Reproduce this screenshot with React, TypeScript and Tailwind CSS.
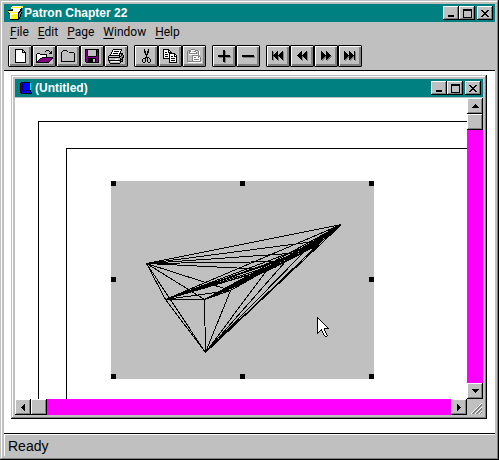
import type { ReactNode } from "react";

const COLORS: Record<string, string> = {
  k: "#000000",
  w: "#ffffff",
  g: "#808080",
  s: "#c0c0c0",
  p: "#800080",
  y: "#ffff00",
  b: "#0000ff",
  n: "#000080",
  c: "#00ffff",
};

function Pixels({ rows }: { rows: string[] }) {
  const width = Math.max(...rows.map((r) => r.length));
  return (
    <svg width={width} height={rows.length} viewBox={`0 0 ${width} ${rows.length}`} shapeRendering="crispEdges" aria-hidden="true" className="shrink-0">
      {rows.flatMap((row, y) =>
        [...row].map((ch, x) => (COLORS[ch] ? <rect key={`${x}-${y}`} x={x} y={y} width={1} height={1} fill={COLORS[ch]} /> : null)),
      )}
    </svg>
  );
}

const ICONS = {
  fresh: [
    "kkkkkkkk...",
    "kwwwwwwkk..",
    "kwwwwwwkwk.",
    "kwwwwwwkkkk",
    "kwwwwwwwwwk",
    "kwwwwwwwwwk",
    "kwwwwwwwwwk",
    "kwwwwwwwwwk",
    "kwwwwwwwwwk",
    "kwwwwwwwwwk",
    "kwwwwwwwwwk",
    "kwwwwwwwwwk",
    "kwwwwwwwwwk",
    "kkkkkkkkkkk",
  ],
  open: [
    "..........kkk....",
    ".........k...k.k.",
    "..............kk.",
    ".kkk.........kkk.",
    "kwwwkkkkkkk......",
    "kwwwwwwwwwk......",
    "kwwwwwwwwwk......",
    "kwwwwwkkkkkkkkkkk",
    "kwwwkkppppppppppk",
    "kwwkpppppppppppk.",
    "kwkpppppppppppk..",
    "kkpppppppppppk...",
    "kkkkkkkkkkkkk....",
  ],
  folder: [
    "..kkkk........",
    ".kssssk.......",
    "kssssssskkkkk.",
    "kssssssssssssk",
    "kssssssssssssk",
    "kssssssssssssk",
    "kssssssssssssk",
    "kssssssssssssk",
    "kssssssssssssk",
    "kssssssssssssk",
    "kssssssssssssk",
    "kkkkkkkkkkkkkk",
  ],
  save: [
    "kkkkkkkkkkkkkk",
    "kpksssssssskpk",
    "kpksssssssskkk",
    "kpksssssssskpk",
    "kpksssssssskpk",
    "kpksssssssskpk",
    "kpksssssssskpk",
    "kppkkkkkkkkppk",
    "kppppppppppppk",
    "kppkkkkkkkkppk",
    "kppkkkkksskppk",
    "kppkkkkksskppk",
    "kppkkkkksskppk",
    ".kkkkkkkkkkkkk",
  ],
  print: [
    ".....kkkkkkkkk..",
    "....kwwwwwwwwk..",
    "....kwkkkkkwk...",
    "...kwwwwwwwwk...",
    "...kwkkkkkwkkkk.",
    "..kwwwwwwwwkskk.",
    ".kkkkkkkkkkkskgk",
    "ksssssssssskkggk",
    "kkkkkkkkkkkksgkk",
    "kssssssssssskgk.",
    "ksssssswwwsskkk.",
    "kkkkkkkkkkkkkgk.",
    ".kswwwwwwwwskkk.",
    ".kssssssssssk...",
    "..kkkkkkkkkk....",
  ],
  cut: [
    "..k...k..",
    "..k...k..",
    "..kk.kk..",
    "..kk.kk..",
    "...k.k...",
    "...kkk...",
    "....k....",
    "....k....",
    "...kkkk..",
    ".kkk.k.k.",
    "k..k.k..k",
    "k..k.k..k",
    "k..k.k..k",
    ".kk...kk.",
  ],
  copy: [
    "kkkkkk........",
    "kwwwwkk.......",
    "kwwwwkwk......",
    "kwkkwkkkk.....",
    "kwwwwwkkkkkk..",
    "kwkkkwkwwwwkk.",
    "kwwwwwkwwwwkwk",
    "kwkkkwkwkkwkkk",
    "kwwwwwkwwwwwwk",
    "kkkkkkkwkkkkwk",
    "......kwwwwwwk",
    "......kwkkkkwk",
    "......kwwwwwwk",
    "......kkkkkkkk",
  ],
  paste: [
    ".....gggg......",
    "..gggwwwwggg...",
    ".gsggwssggwsgw.",
    ".gsgwwwwwwgsgw.",
    ".gsggggggggsgw.",
    ".gswwwwwwwwwgw.",
    ".gssssggggggg..",
    ".gssssgwwwwwgg.",
    ".gssssgwggwwgwg",
    ".gssssgwwwwwwwg",
    ".gssssgwgggggwg",
    ".gssssgwwwwwwwg",
    ".ggggggggggggggw",
    "..wwwwwwwwwwwwww",
  ],
  plus: [
    ".....kk......",
    ".....kkg.....",
    ".....kkg.....",
    ".....kkg.....",
    ".....kkg.....",
    "kkkkkkkkkkkk.",
    "kkkkkkkkkkkkg",
    ".ggggkkgggggg",
    ".....kkg.....",
    ".....kkg.....",
    ".....kkg.....",
    ".....kkg.....",
    "......gg.....",
  ],
  minus: ["kkkkkkkkkkkk.", "kkkkkkkkkkkkg", ".gggggggggggg"],
  first: [
    "k....k....k.",
    "kg..kk...kkg",
    "kg.kkk..kkkg",
    "kgkkkk.kkkkg",
    "kkkkkkkkkkkg",
    "kgkkkkgkkkkg",
    "kg.kkkg.kkkg",
    "kg..kkg..kkg",
    "kg...kg...kg",
    ".g....g....g",
  ],
  back: [
    "....k....k.",
    "...kk...kkg",
    "..kkk..kkkg",
    ".kkkk.kkkkg",
    "kkkkkkkkkkg",
    ".kkkkgkkkkg",
    "..kkkg.kkkg",
    "...kkg..kkg",
    "....kg...kg",
    ".....g....g",
  ],
  forward: [
    "k....k.....",
    "kk...kk....",
    "kkk..kkk...",
    "kkkk.kkkk..",
    "kkkkkkkkkk.",
    "kkkkgkkkkgg",
    "kkkggkkkgg.",
    "kkgg.kkgg..",
    "kgg..kgg...",
    ".g....g....",
  ],
  last: [
    "k....k....k.",
    "kk...kk...kg",
    "kkk..kkk..kg",
    "kkkk.kkkk.kg",
    "kkkkkkkkkkkg",
    "kkkkgkkkkgkg",
    "kkkggkkkggkg",
    "kkgg.kkgg.kg",
    "kgg..kgg..kg",
    ".g....g....g",
  ],
  app: [
    "....wwwwwwwwwyy",
    "...yyyyyyyyyyyw",
    "...wwwwwwwwwwk.",
    "....kwwwwwwwkk.",
    "kkkkkwwwwwwwkk.",
    "ywwwwwwwwwwkkg.",
    "kyyyyyyyyykkgk.",
    ".kwwwwwwwwkggk.",
    "..wwyyyyyykgk..",
    "..wyyyyyyykgk..",
    "..wyyyyyyykgk..",
    "..wyyyyyyykk...",
    "..wyyyyyyykk...",
    "..kkkkkkkkk....",
  ],
  doc: [
    ".kkkkkkkkk..",
    "kbnbbbbbbkc.",
    "kbnbbbbbbkc.",
    "kbnbbbbbbkc.",
    "kbnbbbbbbkc.",
    "kbnbbbbbbkc.",
    "kbnbbbbbbkc.",
    "kbnbbbbbbkc.",
    "kbnnnnnnnkk.",
    "knbbbbbbbbk.",
    "kkbbbbbbbbbk",
    ".kkkkkkkkkkk",
  ],
  min: [".......", ".......", ".......", ".......", ".......", ".......", "kkkkkk.", "kkkkkk."],
  max: ["kkkkkkkkk", "kkkkkkkkk", "k.......k", "k.......k", "k.......k", "k.......k", "k.......k", "k.......k", "kkkkkkkkk"],
  close: ["kk....kk", ".kk..kk.", "..kkkk..", "...kk...", "..kkkk..", ".kk..kk.", "kk....kk"],
  up: ["...k...", "..kkk..", ".kkkkk.", "kkkkkkk"],
  down: ["kkkkkkk", ".kkkkk.", "..kkk..", "...k..."],
  left: ["...k", "..kk", ".kkk", "kkkk", ".kkk", "..kk", "...k"],
  right: ["k...", "kk..", "kkk.", "kkkk", "kkk.", "kk..", "k..."],
  cursor: [
    "k...........",
    "kk..........",
    "kwk.........",
    "kwwk........",
    "kwwwk.......",
    "kwwwwk......",
    "kwwwwwk.....",
    "kwwwwwwk....",
    "kwwwwwwwk...",
    "kwwwwwwwwk..",
    "kwwwwwwwwwk.",
    "kwwwwwwkkkkk",
    "kwwwkwwk....",
    "kwwkkwwk....",
    "kwk..kwwk...",
    "kk...kwwk...",
    "k.....kwwk..",
    "......kwwk..",
    ".......kwwk.",
    "........kk..",
  ],
};

type IconName = keyof typeof ICONS;

const RAISED = "shadow-[inset_-1px_-1px_#000,inset_1px_1px_#fff,inset_-2px_-2px_#808080]";

function Face({ icon, label, size }: { icon?: IconName; label: string; size: string }) {
  return (
    <button type="button" aria-label={label} className={`flex shrink-0 items-center justify-center bg-[#c0c0c0] ${RAISED} ${size}`}>
      {icon && <Pixels rows={ICONS[icon]} />}
    </button>
  );
}

function TitleBar({ icon, title }: { icon: IconName; title: string }) {
  return (
    <header className="flex h-[18px] shrink-0 items-center bg-[#008080] px-[2px]">
      <span className="flex w-[18px] justify-center">
        <Pixels rows={ICONS[icon]} />
      </span>
      <h1 className="flex-1 text-[12px] leading-[18px] font-bold text-white">{title}</h1>
      <Face icon="min" label="Minimize" size="h-[14px] w-4" />
      <Face icon="max" label="Maximize" size="mr-[2px] h-[14px] w-4" />
      <Face icon="close" label="Close" size="h-[14px] w-4" />
    </header>
  );
}

const TOOL_GROUPS: { icon: IconName; label: string }[][] = [
  [
    { icon: "fresh", label: "New" },
    { icon: "open", label: "Open" },
    { icon: "folder", label: "Close" },
    { icon: "save", label: "Save" },
    { icon: "print", label: "Print" },
  ],
  [
    { icon: "cut", label: "Cut" },
    { icon: "copy", label: "Copy" },
    { icon: "paste", label: "Paste" },
  ],
  [
    { icon: "plus", label: "New page" },
    { icon: "minus", label: "Delete page" },
  ],
  [
    { icon: "first", label: "First page" },
    { icon: "back", label: "Previous page" },
    { icon: "forward", label: "Next page" },
    { icon: "last", label: "Last page" },
  ],
];

function ToolButton({ icon, label }: { icon: IconName; label: string }) {
  return (
    <button
      type="button"
      aria-label={label}
      className="flex h-[22px] w-6 items-center justify-center rounded-[1px] border border-black bg-[#c0c0c0] shadow-[inset_1px_1px_#fff,inset_-2px_-2px_#808080]"
    >
      <Pixels rows={ICONS[icon]} />
    </button>
  );
}

type Point = [number, number];

const TIP: Point = [230, 43];
const EDGE: Point[] = [TIP, [211, 59], [192, 71], [174, 80], [156, 88], [119, 109], [93, 118]];
const SPINE: Point[] = [[220, 52], [202, 66], [183, 76], [165, 85], [146, 94], [133, 101]];
const NOSE: Point = [35, 82];
const WING: Point = [54, 118];
const FOLD: Point = [93, 118];
const KEEL: Point = [94, 171];

const fan = (from: Point, to: Point[]) => to.map((p) => `M${from.join(" ")}L${p.join(" ")}`).join("");

function Wireframe() {
  return (
    <svg width="263" height="198" viewBox="0 0 263 198" shapeRendering="crispEdges" fill="none" stroke="#000" role="img" aria-label="Wireframe model">
      <g transform="translate(0.5 0.5)">
        <path d={fan(NOSE, EDGE)} />
        <path d={fan(KEEL, EDGE)} />
        <path d={fan(WING, EDGE)} />
        <path d={fan(FOLD, [...EDGE, ...SPINE])} />
        <path d={fan(TIP, [...EDGE, ...SPINE])} />
        <path d={fan(WING, [SPINE[1], SPINE[3]])} />
        <path d={`M${NOSE}L${WING}L${KEEL}L${NOSE}`} />
        <path d={`M${EDGE.join("L")}`} />
      </g>
    </svg>
  );
}

const HANDLES = [
  "left-0 top-0",
  "left-[129px] top-0",
  "right-0 top-0",
  "left-0 top-24",
  "right-0 top-24",
  "left-0 bottom-0",
  "left-[129px] bottom-0",
  "right-0 bottom-0",
];

function Page(): ReactNode {
  return (
    <main className="min-w-0 flex-1 overflow-hidden bg-white pt-[23px] pl-[23px]">
      <div className="h-full border-t border-l border-black pt-[26px] pl-[27px]">
        <div className="h-full border-t border-l border-black pt-8 pl-11">
          <div className="relative h-[198px] w-[263px] bg-[#c0c0c0]">
            <Wireframe />
            {HANDLES.map((place) => (
              <span key={place} className={`absolute size-[5px] bg-black ${place}`} />
            ))}
            <span className="absolute top-[136px] left-[206px]">
              <Pixels rows={ICONS.cursor} />
            </span>
          </div>
        </div>
      </div>
    </main>
  );
}

const WINDOW_EDGE =
  "shadow-[inset_-1px_-1px_#000,inset_1px_1px_#c0c0c0,inset_-2px_-2px_#808080,inset_2px_2px_#fff]";

export default function App() {
  return (
    <div className={`flex h-screen min-h-80 w-full flex-col bg-[#c0c0c0] p-1 font-["Liberation_Sans",Arial,sans-serif] text-black ${WINDOW_EDGE}`}>
      <TitleBar icon="app" title="Patron Chapter 22" />
      <nav className={`flex h-[19px] shrink-0 items-center gap-[9px] pl-[6px] font-["Roboto",sans-serif] text-[12px] leading-[18px]`}>
        {["File", "Edit", "Page", "Window", "Help"].map((item) => (
          <button key={item} type="button">
            <span className="underline underline-offset-2">{item[0]}</span>
            {item.slice(1)}
          </button>
        ))}
      </nav>
      <div className="flex h-[30px] shrink-0 gap-[6px] border-b border-black pt-1 pl-1">
        {TOOL_GROUPS.map((group, i) => (
          <div key={i} className="flex">
            {group.map((tool) => (
              <ToolButton key={tool.icon} {...tool} />
            ))}
          </div>
        ))}
      </div>

      <div className="flex min-h-0 flex-1 bg-white pt-1 pr-2 pb-[14px] pl-[7px]">
        <section className={`flex min-w-0 flex-1 flex-col bg-[#c0c0c0] p-1 ${WINDOW_EDGE}`}>
          <TitleBar icon="doc" title="(Untitled)" />
          <div className="mt-px flex min-h-0 flex-1">
            <Page />
            <div className="flex w-4 shrink-0 flex-col bg-[#ff00ff]">
              <Face icon="up" label="Scroll up" size="size-4" />
              <Face label="Vertical position" size="size-4" />
              <span className="flex-1" />
              <Face icon="down" label="Scroll down" size="size-4" />
            </div>
          </div>
          <div className="flex h-4 shrink-0 bg-[#ff00ff]">
            <Face icon="left" label="Scroll left" size="size-4" />
            <Face label="Horizontal position" size="size-4" />
            <span className="flex-1" />
            <Face icon="right" label="Scroll right" size="size-4" />
            <svg width="16" height="16" viewBox="0 0 16 16" className="bg-[#c0c0c0]" aria-hidden="true">
              <path d="M4 15L15 4M8 15L15 8M12 15L15 12" stroke="#fff" />
              <path d="M5 15L15 5M6 15L15 6M9 15L15 9M10 15L15 10M13 15L15 13" stroke="#808080" />
            </svg>
          </div>
        </section>
      </div>

      <footer className="h-[23px] shrink-0 border-t border-black">
        <p className="h-full border-t border-l border-white pl-[3px] text-[14px] leading-[22px]">Ready</p>
      </footer>
    </div>
  );
}
